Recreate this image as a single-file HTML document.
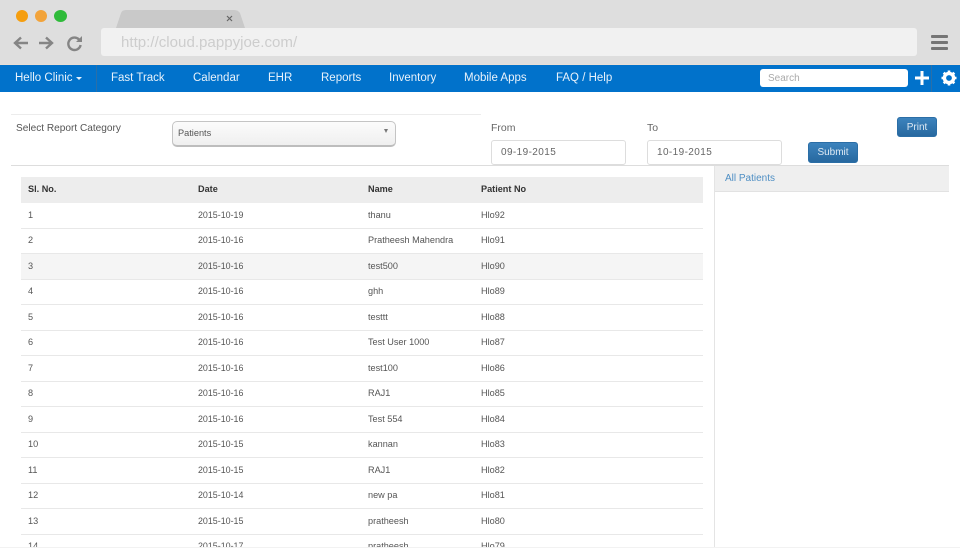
<!DOCTYPE html>
<html><head><meta charset="utf-8"><style>
html,body{margin:0;padding:0;background:#fff}
#p{position:relative;width:960px;height:548px;overflow:hidden;background:#fff;font-family:"Liberation Sans",Arial,sans-serif;color:#444;filter:blur(.3px)}
#p div,#p span.a,#p svg{position:absolute}
.n{top:70px;height:16px;line-height:16px;font-size:11.5px;color:#e8f2fb;white-space:nowrap}
.c{font-size:9.15px;line-height:12px;white-space:nowrap;color:#555}
.d{font-size:8.9px}
.l{left:21px;width:682px;height:1px;background:#e8e8e8}
.b{background:linear-gradient(#3c83bd,#27689f);border:1px solid #2b6ea6;border-radius:3px;color:#dfeaf4;font-size:10px;text-align:center;box-sizing:border-box}
.i{background:#fff;border:1px solid #ddd;border-radius:3px;box-sizing:border-box;font-size:10px;color:#666;letter-spacing:.4px;padding-left:9px;line-height:24px}
</style></head><body><div id="p">
<div style="left:0;top:0;width:960px;height:65px;background:#dedede"></div>
<div style="left:0;top:64px;width:960px;height:1px;background:#e9dfd6"></div>
<div style="left:16px;top:10px;width:12px;height:12px;border-radius:50%;background:#f59e0f"></div>
<div style="left:35px;top:10px;width:12px;height:12px;border-radius:50%;background:#f2a33a"></div>
<div style="left:54px;top:10px;width:13px;height:12px;border-radius:50%;background:#2fbb3a"></div>
<svg style="left:114px;top:9px" width="134" height="20"><path d="M2 19 L7 4 Q8 1 12 1 H120 Q124 1 126 4 L131 19 Z" fill="#c9c9c9"/><path d="M113 7 L118 12 M118 7 L113 12" stroke="#666" stroke-width="1.2"/></svg>
<svg style="left:12px;top:33px" width="74" height="20" fill="none" stroke="#858585" stroke-width="2.4">
<path d="M3 10 H16 M9 4.5 L3 10 L9 15.5"/><path d="M27 10 H40 M34 4.5 L40 10 L34 15.5"/>
<path d="M67 6.5 A6.2 6.2 0 1 0 68.6 12"/><path d="M70 3 V9 H64 Z" fill="#858585" stroke="none"/></svg>
<div style="left:101px;top:28px;width:816px;height:28px;background:#f1f1f1;border-radius:3px"></div>
<div style="left:121px;top:35px;font-size:15.1px;line-height:16px;color:#cdcdcd;white-space:nowrap">http://cloud.pappyjoe.com/</div>
<div style="left:931px;top:35px;width:17px;height:3px;background:#757575;border-radius:1px"></div>
<div style="left:931px;top:41px;width:17px;height:3px;background:#757575;border-radius:1px"></div>
<div style="left:931px;top:47px;width:17px;height:3px;background:#757575;border-radius:1px"></div>

<div style="left:0;top:65px;width:960px;height:27px;background:#0172cb"></div>
<div style="left:96px;top:65px;width:1px;height:27px;background:#2a6fa8"></div>
<div style="left:931px;top:65px;width:1px;height:27px;background:#2a6fa8"></div>
<div class="n" style="left:15px">Hello Clinic</div>
<div style="left:76px;top:77px;width:0;height:0;border:3px solid transparent;border-top-color:#e8f2fb;border-bottom:0"></div>
<div class="n" style="left:111px">Fast Track</div>
<div class="n" style="left:193px">Calendar</div>
<div class="n" style="left:268px">EHR</div>
<div class="n" style="left:321px">Reports</div>
<div class="n" style="left:389px">Inventory</div>
<div class="n" style="left:464px">Mobile Apps</div>
<div class="n" style="left:556px">FAQ / Help</div>
<div style="left:760px;top:69px;width:148px;height:18px;background:#fff;border-radius:3px;font-size:10px;line-height:19px;color:#aaa;text-indent:8px">Search</div>
<svg style="left:914px;top:70px" width="16" height="16"><path d="M8 1 V15 M1 8 H15" stroke="#fff" stroke-width="3"/></svg>
<svg style="left:940px;top:69px" width="18" height="18" viewBox="0 0 18 18"><circle cx="9" cy="9" r="4.6" fill="none" stroke="#fff" stroke-width="3.4"/><path d="M9 1.5 V16.5 M1.5 9 H16.5 M3.7 3.7 L14.3 14.3 M14.3 3.7 L3.7 14.3" stroke="#fff" stroke-width="2.6" stroke-dasharray="3 9 3 0"/></svg>

<div style="left:11px;top:114px;width:470px;height:1px;background:#ececec"></div>
<div style="left:16px;top:123px;font-size:10.1px;line-height:12px;color:#555;white-space:nowrap">Select Report Category</div>
<div style="left:172px;top:121px;width:224px;height:26px;box-sizing:border-box;border:1px solid #c4c4c4;border-bottom:2px solid #bdbdbd;border-radius:5px;background:linear-gradient(#fbfbfb,#efefef);font-size:9.2px;line-height:22px;color:#555;text-indent:5px">Patients</div>
<div style="left:384px;top:129px;width:0;height:0;border:2.5px solid transparent;border-top:4px solid #777;border-bottom:0"></div>
<div style="left:491px;top:122px;font-size:10.5px;line-height:12px;color:#666">From</div>
<div style="left:647px;top:122px;font-size:10.5px;line-height:12px;color:#666">To</div>
<div class="i" style="left:491px;top:140px;width:135px;height:25px">09-19-2015</div>
<div class="i" style="left:647px;top:140px;width:135px;height:25px">10-19-2015</div>
<div class="b" style="left:897px;top:117px;width:40px;height:20px;line-height:20px">Print</div>
<div class="b" style="left:808px;top:142px;width:50px;height:21px;line-height:20px">Submit</div>
<div style="left:11px;top:165px;width:938px;height:1px;background:#ddd"></div>
<div style="left:714px;top:166px;width:235px;height:26px;background:#efefef;border-bottom:1px solid #e2e2e2;box-sizing:border-box;font-size:10px;line-height:25px;color:#4f8fc4;text-indent:11px">All Patients</div>
<div style="left:714px;top:166px;width:1px;height:382px;background:#e4e4e4"></div>

<div style="left:21px;top:177px;width:682px;height:26px;background:#ededed"></div>
<div style="left:21px;top:254px;width:682px;height:25px;background:#f5f5f5"></div>
<div class="c" style="left:28px;top:183px;color:#333;font-weight:bold">Sl. No.</div>
<div class="c" style="left:198px;top:183px;color:#333;font-weight:bold">Date</div>
<div class="c" style="left:368px;top:183px;color:#333;font-weight:bold">Name</div>
<div class="c" style="left:481px;top:183px;color:#333;font-weight:bold">Patient No</div>

<div class="l" style="top:228px"></div><div class="l" style="top:253px"></div><div class="l" style="top:279px"></div><div class="l" style="top:304px"></div><div class="l" style="top:330px"></div><div class="l" style="top:355px"></div><div class="l" style="top:381px"></div><div class="l" style="top:406px"></div><div class="l" style="top:432px"></div><div class="l" style="top:457px"></div><div class="l" style="top:483px"></div><div class="l" style="top:508px"></div><div class="l" style="top:534px"></div>

<div class="c" style="left:28px;top:209px">1</div><div class="c d" style="left:198px;top:209px">2015-10-19</div><div class="c" style="left:368px;top:209px">thanu</div><div class="c" style="left:481px;top:209px">Hlo92</div>
<div class="c" style="left:28px;top:234px">2</div><div class="c d" style="left:198px;top:234px">2015-10-16</div><div class="c" style="left:368px;top:234px">Pratheesh Mahendra</div><div class="c" style="left:481px;top:234px">Hlo91</div>
<div class="c" style="left:28px;top:260px">3</div><div class="c d" style="left:198px;top:260px">2015-10-16</div><div class="c" style="left:368px;top:260px">test500</div><div class="c" style="left:481px;top:260px">Hlo90</div>
<div class="c" style="left:28px;top:285px">4</div><div class="c d" style="left:198px;top:285px">2015-10-16</div><div class="c" style="left:368px;top:285px">ghh</div><div class="c" style="left:481px;top:285px">Hlo89</div>
<div class="c" style="left:28px;top:311px">5</div><div class="c d" style="left:198px;top:311px">2015-10-16</div><div class="c" style="left:368px;top:311px">testtt</div><div class="c" style="left:481px;top:311px">Hlo88</div>
<div class="c" style="left:28px;top:336px">6</div><div class="c d" style="left:198px;top:336px">2015-10-16</div><div class="c" style="left:368px;top:336px">Test User 1000</div><div class="c" style="left:481px;top:336px">Hlo87</div>
<div class="c" style="left:28px;top:362px">7</div><div class="c d" style="left:198px;top:362px">2015-10-16</div><div class="c" style="left:368px;top:362px">test100</div><div class="c" style="left:481px;top:362px">Hlo86</div>
<div class="c" style="left:28px;top:387px">8</div><div class="c d" style="left:198px;top:387px">2015-10-16</div><div class="c" style="left:368px;top:387px">RAJ1</div><div class="c" style="left:481px;top:387px">Hlo85</div>
<div class="c" style="left:28px;top:413px">9</div><div class="c d" style="left:198px;top:413px">2015-10-16</div><div class="c" style="left:368px;top:413px">Test 554</div><div class="c" style="left:481px;top:413px">Hlo84</div>
<div class="c" style="left:28px;top:438px">10</div><div class="c d" style="left:198px;top:438px">2015-10-15</div><div class="c" style="left:368px;top:438px">kannan</div><div class="c" style="left:481px;top:438px">Hlo83</div>
<div class="c" style="left:28px;top:464px">11</div><div class="c d" style="left:198px;top:464px">2015-10-15</div><div class="c" style="left:368px;top:464px">RAJ1</div><div class="c" style="left:481px;top:464px">Hlo82</div>
<div class="c" style="left:28px;top:489px">12</div><div class="c d" style="left:198px;top:489px">2015-10-14</div><div class="c" style="left:368px;top:489px">new pa</div><div class="c" style="left:481px;top:489px">Hlo81</div>
<div class="c" style="left:28px;top:515px">13</div><div class="c d" style="left:198px;top:515px">2015-10-15</div><div class="c" style="left:368px;top:515px">pratheesh</div><div class="c" style="left:481px;top:515px">Hlo80</div>
<div class="c" style="left:28px;top:540px">14</div><div class="c d" style="left:198px;top:540px">2015-10-17</div><div class="c" style="left:368px;top:540px">pratheesh</div><div class="c" style="left:481px;top:540px">Hlo79</div>
<div style="left:0;top:547px;width:960px;height:1px;background:#f2f2f2"></div>
</div></body></html>
